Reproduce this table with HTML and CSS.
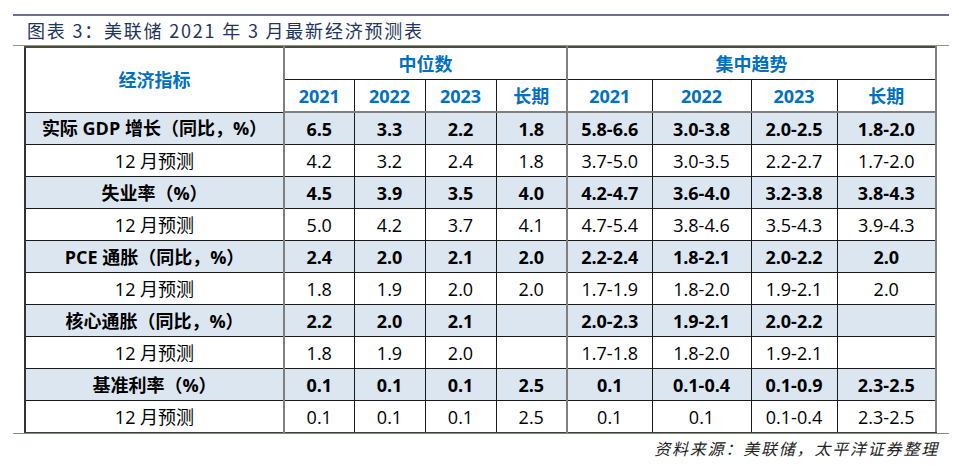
FILE: index.html
```html
<!DOCTYPE html>
<html lang="zh">
<head>
<meta charset="utf-8">
<title>美联储 2021 年 3 月最新经济预测表</title>
<link rel="stylesheet" href="styles.css">
</head>
<body>
<div class="page">
  <div class="rule-top"></div>
  <h1 class="title">图表 3：美联储 2021 年 3 月最新经济预测表</h1>
  <div class="rule-thin"></div>
  <table class="fc">
    <colgroup>
      <col class="c-label">
      <col class="c70"><col class="c71"><col class="c71"><col class="c71">
      <col class="c85"><col class="c99"><col class="c86"><col class="c99">
    </colgroup>
    <thead>
      <tr>
        <th rowspan="2" class="lab">经济指标</th>
        <th colspan="4" class="grp">中位数</th>
        <th colspan="4" class="grp">集中趋势</th>
      </tr>
      <tr>
        <th>2021</th><th>2022</th><th>2023</th><th class="end">长期</th>
        <th>2021</th><th>2022</th><th>2023</th><th>长期</th>
      </tr>
    </thead>
    <tbody>
      <tr class="main"><td class="lab">实际 GDP 增长（同比，%）</td><td>6.5</td><td>3.3</td><td>2.2</td><td class="end">1.8</td><td>5.8-6.6</td><td>3.0-3.8</td><td>2.0-2.5</td><td>1.8-2.0</td></tr>
      <tr class="sub"><td class="lab">12 月预测</td><td>4.2</td><td>3.2</td><td>2.4</td><td class="end">1.8</td><td>3.7-5.0</td><td>3.0-3.5</td><td>2.2-2.7</td><td>1.7-2.0</td></tr>
      <tr class="main"><td class="lab">失业率（%）</td><td>4.5</td><td>3.9</td><td>3.5</td><td class="end">4.0</td><td>4.2-4.7</td><td>3.6-4.0</td><td>3.2-3.8</td><td>3.8-4.3</td></tr>
      <tr class="sub"><td class="lab">12 月预测</td><td>5.0</td><td>4.2</td><td>3.7</td><td class="end">4.1</td><td>4.7-5.4</td><td>3.8-4.6</td><td>3.5-4.3</td><td>3.9-4.3</td></tr>
      <tr class="main"><td class="lab">PCE 通胀（同比，%）</td><td>2.4</td><td>2.0</td><td>2.1</td><td class="end">2.0</td><td>2.2-2.4</td><td>1.8-2.1</td><td>2.0-2.2</td><td>2.0</td></tr>
      <tr class="sub"><td class="lab">12 月预测</td><td>1.8</td><td>1.9</td><td>2.0</td><td class="end">2.0</td><td>1.7-1.9</td><td>1.8-2.0</td><td>1.9-2.1</td><td>2.0</td></tr>
      <tr class="main"><td class="lab">核心通胀（同比，%）</td><td>2.2</td><td>2.0</td><td>2.1</td><td class="end"></td><td>2.0-2.3</td><td>1.9-2.1</td><td>2.0-2.2</td><td></td></tr>
      <tr class="sub"><td class="lab">12 月预测</td><td>1.8</td><td>1.9</td><td>2.0</td><td class="end"></td><td>1.7-1.8</td><td>1.8-2.0</td><td>1.9-2.1</td><td></td></tr>
      <tr class="main"><td class="lab">基准利率（%）</td><td>0.1</td><td>0.1</td><td>0.1</td><td class="end">2.5</td><td>0.1</td><td>0.1-0.4</td><td>0.1-0.9</td><td>2.3-2.5</td></tr>
      <tr class="sub"><td class="lab">12 月预测</td><td>0.1</td><td>0.1</td><td>0.1</td><td class="end">2.5</td><td>0.1</td><td>0.1</td><td>0.1-0.4</td><td>2.3-2.5</td></tr>
    </tbody>
  </table>
  <div class="rule-bottom"></div>
  <p class="source">资料来源：美联储，太平洋证券整理</p>
</div>
</body>
</html>
```
FILE: styles.css
```css
html, body {
  margin: 0;
  padding: 0;
  background: #ffffff;
}

.page {
  width: 936px;
  margin-left: 13px;
  padding-top: 14px;
  font-family: "Open Sans", "Noto Sans CJK SC", sans-serif;
}

.rule-top {
  height: 2px;
  background: #6b6d9e;
}

.title {
  margin: 0;
  height: 29px;
  padding-left: 14px;
  font-family: "Noto Sans CJK SC", sans-serif;
  font-weight: 400;
  font-size: 18px;
  line-height: 29px;
  letter-spacing: 1.8px;
  color: #1f3560;
}

.rule-thin {
  height: 1px;
  background: #8c8db8;
}

.fc {
  margin-left: 11px;
  width: 911px;
  border-collapse: collapse;
  table-layout: fixed;
  font-size: 18px;
  color: #000000;
  border-top: 2px solid #4a4a4a;
  border-left: 2px solid #333333;
  border-right: 2px solid #808080;
  border-bottom: 2px solid #404040;
}

.c-label { width: 259px; }
.c70 { width: 70px; }
.c71 { width: 71px; }
.c85 { width: 85px; }
.c86 { width: 86px; }
.c99 { width: 99px; }

.fc th,
.fc td {
  height: 31px;
  padding: 0;
  text-align: center;
  vertical-align: middle;
  border: 1px solid #1a1a1a;
  white-space: nowrap;
  line-height: 20px;
}

.fc th {
  color: #0070c0;
  font-weight: 700;
}

.fc .lab {
  border-right: 2px solid #7f7f7f;
}

.fc .end {
  border-right: 2px solid #7f7f7f;
}

.fc .grp + .grp {
  border-left: 2px solid #7f7f7f;
}

.fc thead tr:last-child th {
  border-bottom: 2px solid #7f7f7f;
}

.fc .main td {
  background: #dce6f1;
  font-weight: 700;
}

.fc .sub td {
  background: #ffffff;
  font-weight: 400;
}

.rule-bottom {
  height: 1px;
  margin-top: -1px;
  background: #8080c0;
}

.source {
  margin: 3px 0 0 0;
  padding-right: 10px;
  text-align: right;
  font-family: "Noto Sans CJK SC", sans-serif;
  font-style: italic;
  font-size: 16px;
  line-height: 22px;
  letter-spacing: 1.8px;
  color: #222222;
}
```
